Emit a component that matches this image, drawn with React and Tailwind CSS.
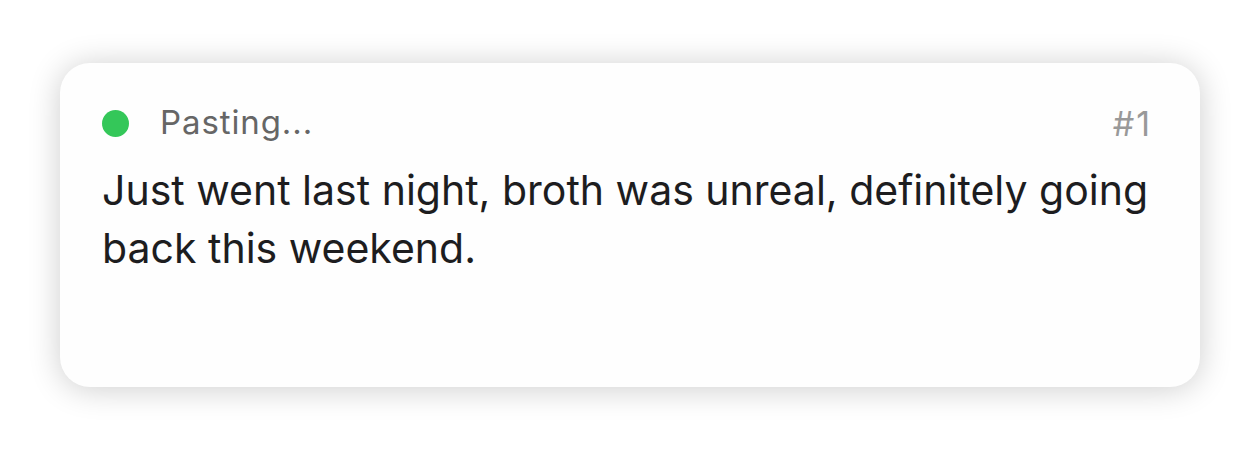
export default function App() {
  return (
    <div className="w-[1260px] h-[450px] bg-white pt-[63px] pl-[60px]" style={{ fontFamily: 'Inter, "Noto Sans", sans-serif' }}>
      <div className="w-[1140px] h-[324px] rounded-[30px] bg-[#fefefe] shadow-[0_2px_32px_rgba(0,0,0,0.2)] pl-[42px] pr-[48px] pt-[40px]">
        <div className="flex items-center h-[40px]">
          <span className="w-[27px] h-[27px] rounded-full bg-[#34c759]"></span>
          <span className="ml-[31px] text-[33px] text-[#666666] tracking-[0.9px]">Pasting...</span>
          <span className="ml-auto text-[34px] text-[#999999] tracking-[2px]">#1</span>
        </div>
        <p className="mt-[18px] text-[41px] leading-[58px] text-[#1d1d1f]">
          Just went last night, broth was unreal, definitely going back this weekend.
        </p>
      </div>
    </div>
  );
}
